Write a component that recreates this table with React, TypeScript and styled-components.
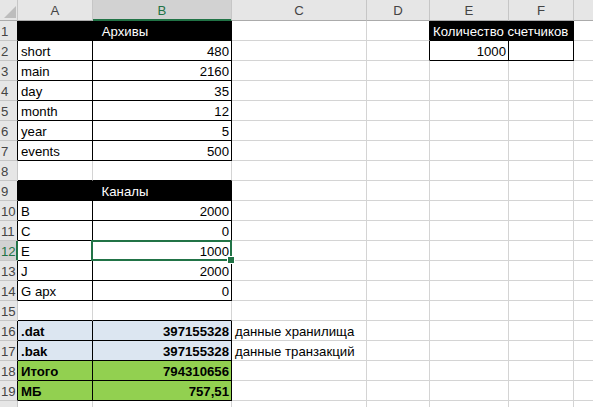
import React from 'react';
import styled, { createGlobalStyle } from 'styled-components';

const GREEN = '#217346';
const GRID = '#d4d4d4';
const HEAD_LINE = '#c6c6c6';
const BLACK = '#000000';

const GlobalStyle = createGlobalStyle`
  html, body { margin: 0; padding: 0; background: #ffffff; }
  body { font-family: "Liberation Sans", Arial, sans-serif; }
`;

const Sheet = styled.div`
  width: 593px;
  height: 407px;
  overflow: hidden;
  display: grid;
  grid-template-columns: 18px 75px 139px 135px 63px 79px 65px 80px;
  grid-auto-rows: 20px;
  grid-template-rows: 21px;
  font-family: "Liberation Sans", Arial, sans-serif;
  font-size: 13.2px;
  color: #000;
`;

const ColHead = styled.div<{ $sel?: boolean }>`
  box-sizing: border-box;
  height: 21px;
  display: flex;
  align-items: center;
  justify-content: center;
  background: ${p => (p.$sel ? '#d2d2d2' : '#e6e6e6')};
  color: ${p => (p.$sel ? GREEN : '#444444')};
  border-right: 1px solid ${HEAD_LINE};
  border-bottom: 1px solid ${p => (p.$sel ? GREEN : '#ababab')};
  box-shadow: ${p => (p.$sel ? `inset 0 -1px 0 ${GREEN}` : 'none')};
  padding-top: 1px;
`;

const Corner = styled.div`
  box-sizing: border-box;
  height: 21px;
  background: #e6e6e6;
  border-right: 1px solid ${HEAD_LINE};
  border-bottom: 1px solid #ababab;
  display: flex;
  align-items: flex-end;
  justify-content: flex-end;
  padding: 0 1px 2px 0;
`;

const RowHead = styled.div<{ $sel?: boolean; $br: string }>`
  box-sizing: border-box;
  display: flex;
  align-items: flex-end;
  padding: 0 0 1px 1px;
  background: ${p => (p.$sel ? '#d2d2d2' : '#e6e6e6')};
  color: ${p => (p.$sel ? GREEN : '#444444')};
  border-right: 1px solid ${p => (p.$sel ? GREEN : p.$br)};
  border-bottom: 1px solid ${HEAD_LINE};
  box-shadow: ${p => (p.$sel ? `inset -1px 0 0 ${GREEN}` : 'none')};
  white-space: nowrap;
  overflow: hidden;
`;

const Cell = styled.div<{
  $br: string;
  $bb: string;
  $bg?: string;
  $align?: 'left' | 'right' | 'center';
  $bold?: boolean;
  $color?: string;
  $span?: number;
}>`
  box-sizing: border-box;
  position: relative;
  display: flex;
  align-items: flex-end;
  justify-content: ${p =>
    p.$align === 'right' ? 'flex-end' : p.$align === 'center' ? 'center' : 'flex-start'};
  grid-column: span ${p => p.$span ?? 1};
  padding: 0 2px 1px 3px;
  background: ${p => p.$bg ?? '#ffffff'};
  color: ${p => p.$color ?? '#000000'};
  font-weight: ${p => (p.$bold ? 700 : 400)};
  border-right: 1px solid ${p => p.$br};
  border-bottom: 1px solid ${p => p.$bb};
  white-space: nowrap;
`;

const Selection = styled.div`
  position: absolute;
  left: -2px;
  top: -1px;
  right: -1px;
  bottom: -1px;
  border: 2px solid ${GREEN};
  pointer-events: none;
  z-index: 2;
`;

const Handle = styled.div`
  position: absolute;
  right: -5px;
  bottom: -5px;
  width: 6px;
  height: 6px;
  background: ${GREEN};
  border: 1px solid #ffffff;
  z-index: 3;
`;

type CellDef = {
  text?: string;
  align?: 'left' | 'right' | 'center';
  bg?: string;
  color?: string;
  bold?: boolean;
  span?: number;
  selected?: boolean;
};

const BLUE = '#dce6f1';
const LIME = '#92d050';

const ranges = [
  { r1: 1, r2: 7, c1: 1, c2: 2 },
  { r1: 9, r2: 14, c1: 1, c2: 2 },
  { r1: 16, r2: 19, c1: 1, c2: 2 },
  { r1: 1, r2: 2, c1: 5, c2: 6 },
];

const inRange = (r: number, c: number) =>
  ranges.some(g => r >= g.r1 && r <= g.r2 && c >= g.c1 && c <= g.c2);

const cols = ['A', 'B', 'C', 'D', 'E', 'F', 'G'];

const rowsData: Record<number, Record<number, CellDef>> = {
  1: {
    1: { text: 'Архивы', align: 'center', bg: BLACK, color: '#fff', span: 2 },
    5: { text: 'Количество счетчиков', bg: BLACK, color: '#fff', span: 2 },
  },
  2: { 1: { text: 'short' }, 2: { text: '480', align: 'right' }, 5: { text: '1000', align: 'right' }, 6: {} },
  3: { 1: { text: 'main' }, 2: { text: '2160', align: 'right' } },
  4: { 1: { text: 'day' }, 2: { text: '35', align: 'right' } },
  5: { 1: { text: 'month' }, 2: { text: '12', align: 'right' } },
  6: { 1: { text: 'year' }, 2: { text: '5', align: 'right' } },
  7: { 1: { text: 'events' }, 2: { text: '500', align: 'right' } },
  9: { 1: { text: 'Каналы', align: 'center', bg: BLACK, color: '#fff', span: 2 } },
  10: { 1: { text: 'B' }, 2: { text: '2000', align: 'right' } },
  11: { 1: { text: 'C' }, 2: { text: '0', align: 'right' } },
  12: { 1: { text: 'E' }, 2: { text: '1000', align: 'right', selected: true } },
  13: { 1: { text: 'J' }, 2: { text: '2000', align: 'right' } },
  14: { 1: { text: 'G apx' }, 2: { text: '0', align: 'right' } },
  16: {
    1: { text: '.dat', bg: BLUE, bold: true },
    2: { text: '397155328', align: 'right', bg: BLUE, bold: true },
    3: { text: 'данные хранилища' },
  },
  17: {
    1: { text: '.bak', bg: BLUE, bold: true },
    2: { text: '397155328', align: 'right', bg: BLUE, bold: true },
    3: { text: 'данные транзакций' },
  },
  18: {
    1: { text: 'Итого', bg: LIME, bold: true },
    2: { text: '794310656', align: 'right', bg: LIME, bold: true },
  },
  19: {
    1: { text: 'МБ', bg: LIME, bold: true },
    2: { text: '757,51', align: 'right', bg: LIME, bold: true },
  },
};

const SEL_ROW = 12;
const SEL_COL = 2;
const LAST_ROW = 20;

function renderRow(r: number) {
  const out: React.ReactNode[] = [];
  const data = rowsData[r] ?? {};
  out.push(
    <RowHead key={`h${r}`} $sel={r === SEL_ROW} $br={inRange(r, 1) ? BLACK : HEAD_LINE}>
      {r < LAST_ROW ? r : null}
    </RowHead>
  );
  let c = 1;
  while (c <= 7) {
    const d = data[c] ?? {};
    const span = d.span ?? 1;
    const last = c + span - 1;
    const br = inRange(r, last) || inRange(r, last + 1) ? BLACK : GRID;
    const bb = inRange(r, c) || inRange(r + 1, c) ? BLACK : GRID;
    out.push(
      <Cell
        key={`c${r}-${c}`}
        $br={br}
        $bb={bb}
        $bg={d.bg}
        $align={d.align}
        $bold={d.bold}
        $color={d.color}
        $span={span}
      >
        {d.text}
        {d.selected && (
          <Selection>
            <Handle />
          </Selection>
        )}
      </Cell>
    );
    c += span;
  }
  return out;
}

export default function App() {
  const rows: number[] = [];
  for (let r = 1; r <= LAST_ROW; r++) rows.push(r);
  return (
    <>
      <GlobalStyle />
      <Sheet>
        <Corner>
          <svg width="12" height="12" viewBox="0 0 12 12">
            <polygon points="12,0 12,12 0,12" fill="#bdbdbd" />
          </svg>
        </Corner>
        {cols.map((name, i) => (
          <ColHead key={name} $sel={i + 1 === SEL_COL}>
            {name}
          </ColHead>
        ))}
        {rows.map(r => renderRow(r))}
      </Sheet>
    </>
  );
}
